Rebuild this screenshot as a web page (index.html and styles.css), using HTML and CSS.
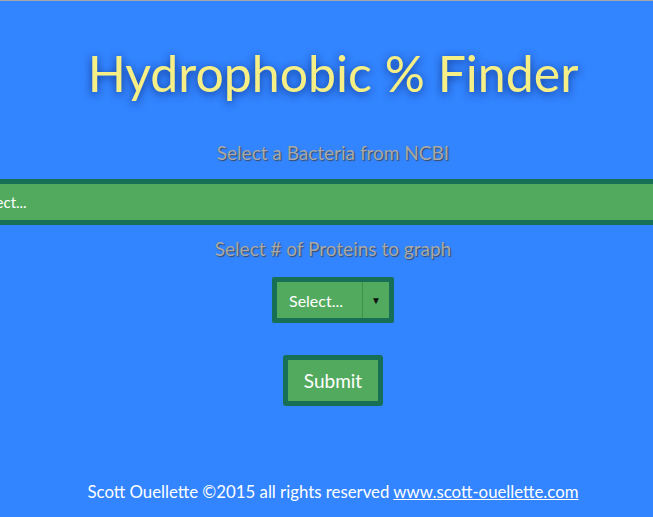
FILE: index.html
```html
<!DOCTYPE html>
<html>
<head>
<meta charset="utf-8">
<link rel="stylesheet" href="styles.css">
</head>
<body>
<div class="page">
  <h1 class="title">Hydrophobic % Finder</h1>
  <p class="label label-first">Select a Bacteria from NCBI</p>
  <div class="wide-select"><span class="wide-text">Select...</span></div>
  <p class="label label-second">Select # of Proteins to graph</p>
  <div class="small-row">
    <div class="small-select">
      <span class="small-text">Select...</span>
      <span class="small-arrow">▼</span>
    </div>
  </div>
  <div class="submit-row">
    <button class="submit">Submit</button>
  </div>
  <footer class="footer">Scott Ouellette ©2015 all rights reserved <a class="footer-link" href="#">www.scott-ouellette.com</a></footer>
</div>
</body>
</html>
```
FILE: styles.css
```css
html, body {
  margin: 0;
  padding: 0;
  overflow: hidden;
  background: #3284ff;
}
body {
  height: 517px;
  border-top: 1px solid #a6a6a6;
  box-sizing: border-box;
  font-family: Lato, "Open Sans", sans-serif;
}
.page {
  width: 666px;
  display: flex;
  flex-direction: column;
  align-items: center;
}
.title {
  margin: 42px 0 0 0;
  font-weight: 400;
  font-size: 50px;
  line-height: 60px;
  letter-spacing: 0;
  color: #f6ef86;
  text-shadow: 0 2px 8px rgba(0, 20, 90, 0.7);
}
.label {
  margin: 0;
  font-size: 19px;
  line-height: 22px;
  color: #a9a9a9;
  text-shadow: 1px 1px 1px rgba(60, 60, 60, 0.8);
}
.label-first {
  margin-top: 39px;
}
.wide-select {
  margin-top: 15px;
  align-self: flex-start;
  margin-left: -41px;
  width: 748px;
  height: 46px;
  box-sizing: border-box;
  border: 5px solid #177056;
  background: #52aa5e;
  display: flex;
  align-items: center;
  padding-left: 12px;
}
.wide-text {
  color: #fff;
  font-size: 15px;
}
.label-second {
  margin-top: 13px;
}
.small-row {
  margin-top: 17px;
  display: flex;
}
.small-select {
  width: 122px;
  height: 46px;
  box-sizing: border-box;
  border: 5px solid #177056;
  border-radius: 2px;
  background: #52aa5e;
  display: flex;
  align-items: stretch;
}
.small-text {
  flex: 1;
  display: flex;
  align-items: center;
  padding-left: 12px;
  color: #fff;
  font-size: 16px;
  border-right: 1px solid #3f8f4d;
}
.small-arrow {
  width: 26px;
  display: flex;
  align-items: center;
  justify-content: center;
  font-size: 10px;
  color: #111;
}
.submit-row {
  margin-top: 32px;
  display: flex;
}
.submit {
  width: 100px;
  height: 51px;
  box-sizing: border-box;
  border: 5px solid #177056;
  border-radius: 3px;
  background: #52aa5e;
  color: #fff;
  font-family: Lato, "Open Sans", sans-serif;
  font-size: 19px;
  padding: 0;
}
.footer {
  margin-top: 76px;
  font-size: 16.8px;
  line-height: 20px;
  color: #fff;
}
.footer-link {
  color: #fff;
  text-decoration: underline;
}
```
